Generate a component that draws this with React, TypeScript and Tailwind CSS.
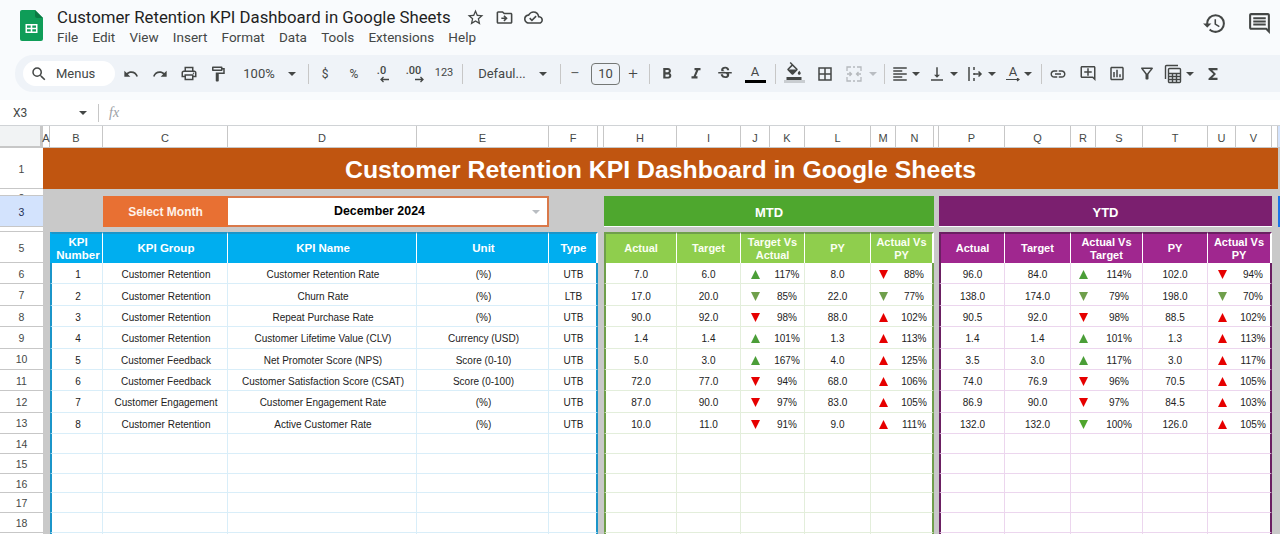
import * as React from 'react';
import clsx from 'clsx';
import {
  MdBorderAll,
  MdFormatAlignLeft,
  MdFormatBold,
  MdFormatColorFill,
  MdFormatItalic,
  MdFunctions,
  MdHistory,
  MdOutlineAddComment,
  MdOutlineCloudDone,
  MdOutlineComment,
  MdOutlineDriveFileMove,
  MdOutlineFilterAlt,
  MdOutlineFormatPaint,
  MdOutlineInsertChart,
  MdOutlinePrint,
  MdOutlineStarBorder,
  MdInsertLink,
  MdRedo,
  MdSearch,
  MdStrikethroughS,
  MdUndo,
  MdVerticalAlignBottom,
} from 'react-icons/md';

type Arrow = 'gu' | 'gd' | 'rd' | 'ru' | 'bd';

type Kpi = {
  no: number;
  group: string;
  name: string;
  unit: string;
  type: string;
  mtd: [string, string, Arrow, string, string, Arrow, string];
  ytd: [string, string, Arrow, string, string, Arrow, string];
};

const kpis: Kpi[] = [
  { no: 1, group: 'Customer Retention', name: 'Customer Retention Rate', unit: '(%)', type: 'UTB', mtd: ['7.0', '6.0', 'gu', '117%', '8.0', 'rd', '88%'], ytd: ['96.0', '84.0', 'gu', '114%', '102.0', 'rd', '94%'] },
  { no: 2, group: 'Customer Retention', name: 'Churn Rate', unit: '(%)', type: 'LTB', mtd: ['17.0', '20.0', 'gd', '85%', '22.0', 'gd', '77%'], ytd: ['138.0', '174.0', 'gd', '79%', '198.0', 'gd', '70%'] },
  { no: 3, group: 'Customer Retention', name: 'Repeat Purchase Rate', unit: '(%)', type: 'UTB', mtd: ['90.0', '92.0', 'rd', '98%', '88.0', 'ru', '102%'], ytd: ['90.5', '92.0', 'rd', '98%', '88.5', 'ru', '102%'] },
  { no: 4, group: 'Customer Retention', name: 'Customer Lifetime Value (CLV)', unit: 'Currency (USD)', type: 'UTB', mtd: ['1.4', '1.4', 'gu', '101%', '1.3', 'ru', '113%'], ytd: ['1.4', '1.4', 'gu', '101%', '1.3', 'ru', '113%'] },
  { no: 5, group: 'Customer Feedback', name: 'Net Promoter Score (NPS)', unit: 'Score (0-10)', type: 'UTB', mtd: ['5.0', '3.0', 'gu', '167%', '4.0', 'ru', '125%'], ytd: ['3.5', '3.0', 'gu', '117%', '3.0', 'ru', '117%'] },
  { no: 6, group: 'Customer Feedback', name: 'Customer Satisfaction Score (CSAT)', unit: 'Score (0-100)', type: 'UTB', mtd: ['72.0', '77.0', 'rd', '94%', '68.0', 'ru', '106%'], ytd: ['74.0', '76.9', 'rd', '96%', '70.5', 'ru', '105%'] },
  { no: 7, group: 'Customer Engagement', name: 'Customer Engagement Rate', unit: '(%)', type: 'UTB', mtd: ['87.0', '90.0', 'rd', '97%', '83.0', 'ru', '105%'], ytd: ['86.9', '90.0', 'rd', '97%', '84.5', 'ru', '103%'] },
  { no: 8, group: 'Customer Retention', name: 'Active Customer Rate', unit: '(%)', type: 'UTB', mtd: ['10.0', '11.0', 'rd', '91%', '9.0', 'ru', '111%'], ytd: ['132.0', '132.0', 'bd', '100%', '126.0', 'ru', '105%'] },
];

const menus = ['File', 'Edit', 'View', 'Insert', 'Format', 'Data', 'Tools', 'Extensions', 'Help'];

const columns = ['A', 'B', 'C', 'D', 'E', 'F', '', 'H', 'I', 'J', 'K', 'L', 'M', 'N', '', 'P', 'Q', 'R', 'S', 'T', 'U', 'V', ''];

function SheetsLogo() {
  return (
    <svg width="23" height="31" viewBox="0 0 23 31" className="shrink-0">
      <path d="M2 0h13l8 8v21a2 2 0 0 1-2 2H2a2 2 0 0 1-2-2V2a2 2 0 0 1 2-2z" fill="#0f9d58" />
      <path d="M15 0l8 8h-6a2 2 0 0 1-2-2z" fill="#0b7a44" />
      <path d="M5.5 14h12v9h-12z M7 15.5v2.2h3.7v-2.2z M12.3 15.5v2.2H16v-2.2z M7 19.3v2.2h3.7v-2.2z M12.3 19.3v2.2H16v-2.2z" fill="#fff" fillRule="evenodd" />
    </svg>
  );
}

function Caret({ className, light }: { className?: string; light?: boolean }) {
  return (
    <svg width="8" height="4" viewBox="0 0 8 4" className={clsx('shrink-0', className)}>
      <polygon points="0,0 8,0 4,4" fill={light ? '#b9bdc2' : '#444746'} />
    </svg>
  );
}

function Divider({ className }: { className?: string }) {
  return <div className={clsx('h-5 w-px shrink-0 bg-[#c7c7c7]', className)} />;
}

function MergeIcon() {
  return (
    <svg width="18" height="18" viewBox="0 0 18 18" fill="none" stroke="#b5b9bd" strokeWidth="1.3">
      <path d="M2 6V2h4 M12 2h4v4 M2 12v4h4 M12 16h4v-4" />
      <path d="M2 9h4 M4.5 7l2 2-2 2 M16 9h-4 M13.5 7l-2 2 2 2" />
      <path d="M8 2h2 M8 16h2" />
    </svg>
  );
}

function WrapIcon() {
  return (
    <svg width="18" height="18" viewBox="0 0 18 18" fill="none" stroke="#444746" strokeWidth="1.5">
      <path d="M3 2v14" />
      <path d="M8 2v3 M8 8v2 M8 13v3" />
      <path d="M8 9h7 M12.5 6.5L15 9l-2.5 2.5" />
    </svg>
  );
}

function TableIcon() {
  return (
    <svg width="18" height="20" viewBox="0 0 18 20" fill="none" stroke="#444746" strokeWidth="1.4">
      <path d="M1.5 15V2.5a1 1 0 0 1 1-1H14" />
      <rect x="4.5" y="4.5" width="12" height="14" rx="1" />
      <path d="M4.5 9.5h12 M4.5 12.5h12 M4.5 15.5h12 M8.5 9.5v9 M12.5 9.5v9" />
    </svg>
  );
}

function DecimalArrow({ right }: { right?: boolean }) {
  return (
    <svg width="9" height="7" viewBox="0 0 9 7" fill="none" stroke="#444746" strokeWidth="1.3" className="-ml-[6px] mt-[12px]">
      {right ? <path d="M0 3.5h8 M5.5 1L8 3.5 5.5 6" /> : <path d="M9 3.5H1 M3.5 1L1 3.5 3.5 6" />}
    </svg>
  );
}

function Slot({ className, children }: { className: string; children: React.ReactNode }) {
  return <div className={clsx('flex shrink-0 items-center justify-center', className)}>{children}</div>;
}

function TopBar() {
  return (
    <div className="flex h-[55px] shrink-0 items-start pl-5 pr-[8px] pt-[10px]">
      <SheetsLogo />
      <div className="ml-[14px] flex flex-col">
        <div className="flex h-[14px] items-center">
          <span className="whitespace-nowrap text-[16.8px] leading-[14px] text-[#1f1f1f]">Customer Retention KPI Dashboard in Google Sheets</span>
          <MdOutlineStarBorder className="ml-[15px] text-[19px] text-[#444746]" />
          <MdOutlineDriveFileMove className="ml-[10px] text-[19px] text-[#444746]" />
          <MdOutlineCloudDone className="ml-[10px] text-[19px] text-[#444746]" />
        </div>
        <div className="mt-[4px] flex gap-[14.2px] text-[13.5px] leading-[18px] text-[#444746]">
          {menus.map((m) => (
            <span key={m}>{m}</span>
          ))}
        </div>
      </div>
      <div className="ml-auto flex items-center gap-[20px] pt-[1px] text-[#444746]">
        <MdHistory className="text-[25px]" />
        <MdOutlineComment className="text-[25px]" />
      </div>
    </div>
  );
}

function Toolbar() {
  return (
    <div className="ml-[15px] flex h-[37px] shrink-0 items-center rounded-l-[18px] bg-[#eff3f8] text-[#444746]">
      <div className="ml-[8px] flex h-[25px] w-[92px] shrink-0 items-center rounded-full bg-white pl-[7px]">
        <MdSearch className="text-[18px]" />
        <span className="ml-[8px] text-[13px]">Menus</span>
      </div>
      <Slot className="ml-[7px] w-[18px]"><MdUndo className="text-[16px]" /></Slot>
      <Slot className="ml-[11px] w-[18px]"><MdRedo className="text-[16px]" /></Slot>
      <Slot className="ml-[11px] w-[18px]"><MdOutlinePrint className="text-[19px]" /></Slot>
      <Slot className="ml-[11px] w-[18px]"><MdOutlineFormatPaint className="text-[18px]" /></Slot>
      <Slot className="ml-[15px] w-[34px] text-[13px]">100%</Slot>
      <Slot className="ml-[11px] w-[10px]"><Caret /></Slot>
      <Divider className="ml-[11px]" />
      <Slot className="ml-[10px] w-[12px] text-[12px]">$</Slot>
      <Slot className="ml-[16px] w-[14px] text-[12px]">%</Slot>
      <Slot className="ml-[13px] w-[18px] text-[11px] font-medium">
        <span className="-mt-[5px]">.0</span>
        <DecimalArrow />
      </Slot>
      <Slot className="ml-[12px] w-[22px] text-[11px] font-medium">
        <span className="-mt-[5px]">.00</span>
        <DecimalArrow right />
      </Slot>
      <Slot className="ml-[8px] w-[20px] text-[11px]">123</Slot>
      <Divider className="ml-[8px]" />
      <Slot className="ml-[14px] w-[50px] whitespace-nowrap text-[13px]">Defaul...</Slot>
      <Slot className="ml-[11px] w-[10px]"><Caret /></Slot>
      <Divider className="ml-[12px]" />
      <Slot className="ml-[8px] w-[12px] text-[17px] font-light">−</Slot>
      <Slot className="ml-[10px] h-[22px] w-[29px] rounded-[4px] border border-[#747775] text-[13px]">10</Slot>
      <Slot className="ml-[7px] w-[12px] text-[17px] font-light">+</Slot>
      <Divider className="ml-[10px]" />
      <Slot className="ml-[8px] w-[18px]"><MdFormatBold className="text-[20px]" /></Slot>
      <Slot className="ml-[11px] w-[18px]"><MdFormatItalic className="text-[20px]" /></Slot>
      <Slot className="ml-[11px] w-[18px]"><MdStrikethroughS className="text-[19px]" /></Slot>
      <Slot className="ml-[11px] w-[20px] flex-col">
        <span className="text-[13px] leading-[14px]">A</span>
        <span className="mt-[1px] h-[3px] w-[21px] bg-black" />
      </Slot>
      <Divider className="ml-[10px]" />
      <Slot className="ml-[8px] w-[20px] flex-col">
        <MdFormatColorFill className="-mt-[3px] text-[18px]" />
        <span className="h-[3px] w-[21px] bg-[#c9cdd1]" />
      </Slot>
      <Slot className="ml-[12px] w-[18px]"><MdBorderAll className="text-[20px]" /></Slot>
      <Slot className="ml-[11px] w-[18px]"><MergeIcon /></Slot>
      <Slot className="ml-[6px] w-[8px]"><Caret light /></Slot>
      <Divider className="ml-[7px]" />
      <Slot className="ml-[6px] w-[18px]"><MdFormatAlignLeft className="text-[20px]" /></Slot>
      <Slot className="ml-[3px] w-[8px]"><Caret /></Slot>
      <Slot className="ml-[8px] w-[18px]"><MdVerticalAlignBottom className="text-[20px]" /></Slot>
      <Slot className="ml-[4px] w-[8px]"><Caret /></Slot>
      <Slot className="ml-[8px] w-[18px]"><WrapIcon /></Slot>
      <Slot className="ml-[4px] w-[8px]"><Caret /></Slot>
      <Slot className="ml-[8px] w-[18px] flex-col">
        <span className="text-[13px] leading-[13px]">A</span>
        <svg width="16" height="5" viewBox="0 0 16 5" fill="none" stroke="#444746" strokeWidth="1.2">
          <path d="M1 1.5h13 M12 0l2 1.5-2 1.5" />
        </svg>
      </Slot>
      <Slot className="ml-[2px] w-[8px]"><Caret /></Slot>
      <Divider className="ml-[9px]" />
      <Slot className="ml-[7px] w-[18px]"><MdInsertLink className="text-[20px]" /></Slot>
      <Slot className="ml-[12px] w-[18px]"><MdOutlineAddComment className="text-[19px]" /></Slot>
      <Slot className="ml-[11px] w-[18px]"><MdOutlineInsertChart className="text-[19px]" /></Slot>
      <Slot className="ml-[12px] w-[18px]"><MdOutlineFilterAlt className="text-[19px]" /></Slot>
      <Slot className="ml-[8px] w-[18px]"><TableIcon /></Slot>
      <Slot className="ml-[4px] w-[8px]"><Caret /></Slot>
      <Slot className="ml-[10px] w-[18px]"><MdFunctions className="text-[20px]" /></Slot>
    </div>
  );
}

function FormulaBar() {
  return (
    <div className="mt-[8px] flex h-[26px] shrink-0 items-center border-b border-[#d0d3d6] bg-white text-[#444746]">
      <span className="ml-[13px] w-[66px] text-[12px]">X3</span>
      <Caret />
      <div className="ml-[11px] h-[18px] w-px bg-[#c7c7c7]" />
      <span className="ml-[10px] font-['Liberation_Serif',serif] text-[14px] italic text-[#9aa0a6]">fx</span>
    </div>
  );
}

function RowHead({ label, active, clipped }: { label?: number; active?: boolean; clipped?: boolean }) {
  return (
    <div
      className={clsx(
        'flex justify-center overflow-hidden border-b border-[#c7c7c7] text-[10.5px]',
        clipped ? 'items-start pt-[3px] leading-[12px]' : 'items-center pt-[3px]',
        active ? 'bg-[#d3e3fd] font-medium text-[#1f2f55]' : 'bg-white text-[#444746]',
      )}
    >
      {label}
    </div>
  );
}

function Triangle({ kind }: { kind: Arrow }) {
  const up = kind === 'gu' || kind === 'ru';
  const fill = { gu: '#4b9e38', gd: '#6f9f4b', rd: '#e60000', ru: '#e60000', bd: '#4fa52d' }[kind];
  return (
    <svg width="9" height="9" viewBox="0 0 9 9">
      <polygon points={up ? '4.5,0 9,9 0,9' : '0,0 9,0 4.5,9'} fill={fill} />
    </svg>
  );
}

const Gray = ({ className }: { className?: string }) => <div className={clsx('bg-[#c9c9c9]', className)} />;

const dataCell = 'flex items-center justify-center whitespace-nowrap border-b bg-white pt-[3px] text-[10px] text-[#222]';
const headCell = 'flex items-center justify-center border-t-2 text-center font-bold leading-[13px]';

function HeaderRow() {
  const blue = clsx(headCell, 'border-r border-t-[#1b95c9] border-r-white bg-[#00aeef] pl-[2px] text-[11.5px] text-white');
  const green = clsx(headCell, 'border-r border-t-[#6f9f4b] border-r-white bg-[#8fce4d] text-[11px] text-[#fbfff2]');
  const purple = clsx(headCell, 'border-r border-t-[#6b1f62] border-r-white bg-[#a0278f] text-[11px] text-white');
  return (
    <>
      <RowHead label={5} />
      <Gray />
      <div className={clsx(blue, 'border-l-2 border-l-[#00aeef]')}>KPI Number</div>
      <div className={blue}>KPI Group</div>
      <div className={blue}>KPI Name</div>
      <div className={blue}>Unit</div>
      <div className={clsx(blue, 'border-r-2 border-r-[#00aeef]')}>Type</div>
      <Gray />
      <div className={clsx(green, 'border-l-2 border-l-[#6f9f4b]')}>Actual</div>
      <div className={green}>Target</div>
      <div className={clsx(green, 'col-span-2')}>Target Vs Actual</div>
      <div className={green}>PY</div>
      <div className={clsx(green, 'col-span-2 border-r-2 border-r-[#6f9f4b]')}>Actual Vs PY</div>
      <Gray />
      <div className={clsx(purple, 'border-l-2 border-l-[#6b1f62]')}>Actual</div>
      <div className={purple}>Target</div>
      <div className={clsx(purple, 'col-span-2')}>Actual Vs Target</div>
      <div className={purple}>PY</div>
      <div className={clsx(purple, 'col-span-2 border-r-2 border-r-[#6b1f62]')}>Actual Vs PY</div>
      <Gray className="col-span-2" />
    </>
  );
}

function DataRow({ rowNo, kpi }: { rowNo?: number; kpi?: Kpi }) {
  const blue = clsx(dataCell, 'border-r border-[#d9eef9] pl-[2px]');
  const green = clsx(dataCell, 'border-r border-[#e3eedb]');
  const purple = clsx(dataCell, 'border-r border-[#ecd6ee]');
  const m = kpi?.mtd;
  const y = kpi?.ytd;
  return (
    <>
      <RowHead label={rowNo} />
      <Gray />
      <div className={clsx(blue, 'border-l-2 border-l-[#1b95c9]')}>{kpi?.no}</div>
      <div className={blue}>{kpi?.group}</div>
      <div className={blue}>{kpi?.name}</div>
      <div className={blue}>{kpi?.unit}</div>
      <div className={clsx(blue, 'border-r-2 border-r-[#1b95c9]')}>{kpi?.type}</div>
      <Gray />
      <div className={clsx(green, 'border-l-2 border-l-[#6f9f4b]')}>{m?.[0]}</div>
      <div className={green}>{m?.[1]}</div>
      <div className={clsx(dataCell, 'border-[#e3eedb]')}>{m && <Triangle kind={m[2]} />}</div>
      <div className={green}>{m?.[3]}</div>
      <div className={green}>{m?.[4]}</div>
      <div className={clsx(dataCell, 'border-[#e3eedb]')}>{m && <Triangle kind={m[5]} />}</div>
      <div className={clsx(green, 'border-r-2 border-r-[#6f9f4b]')}>{m?.[6]}</div>
      <Gray />
      <div className={clsx(purple, 'border-l-2 border-l-[#6b1f62]')}>{y?.[0]}</div>
      <div className={purple}>{y?.[1]}</div>
      <div className={clsx(dataCell, 'border-[#ecd6ee]')}>{y && <Triangle kind={y[2]} />}</div>
      <div className={purple}>{y?.[3]}</div>
      <div className={purple}>{y?.[4]}</div>
      <div className={clsx(dataCell, 'border-[#ecd6ee]')}>{y && <Triangle kind={y[5]} />}</div>
      <div className={clsx(purple, 'border-r-2 border-r-[#6b1f62]')}>{y?.[6]}</div>
      <Gray className="col-span-2" />
    </>
  );
}

function Sheet() {
  return (
    <div className="grid grid-cols-[43px_7px_53px_125px_189px_132px_49px_6px_73px_64px_29px_35px_66px_25px_38px_5px_66px_66px_25px_47px_65px_28px_36px_6px_2px] grid-rows-[22px_41px_7px_31px_5px_31px_repeat(8,21.375px)_repeat(6,19.8px)] font-['Liberation_Sans',Arial,sans-serif]">
      {/* column letters */}
      <div className="border-b-2 border-r-[3px] border-b-[#c7c7c7] border-r-[#c7c7c7] bg-[#f1f3f4]" />
      {columns.map((c, i) => (
        <div
          key={i}
          className="flex items-center justify-center border-b border-r border-[#c7c7c7] bg-white pt-[3px] text-[11px] text-[#444746]"
        >
          {c}
        </div>
      ))}
      <div className="border-b border-[#c7c7c7] bg-[#d3e3fd]" />

      {/* row 1: title */}
      <RowHead label={1} />
      <div className="col-span-23 flex items-center justify-center bg-[#c05510] pt-[2px] text-[24.8px] font-bold text-white">
        Customer Retention KPI Dashboard in Google Sheets
      </div>
      <Gray />

      <RowHead label={2} clipped />
      <Gray className="col-span-24" />

      {/* row 3: month picker and period banners */}
      <RowHead label={3} active />
      <Gray className="col-span-2" />
      <div className="flex items-center justify-center bg-[#e87033] text-[12px] font-bold text-[#fff3ea]">Select Month</div>
      <div className="col-span-2 flex items-center border-y-2 border-r-2 border-[#d9794a] bg-white pl-[106px] pr-[7px] text-[12.4px] font-bold text-black">
        <span>December 2024</span>
        <Caret light className="ml-auto" />
      </div>
      <Gray className="col-span-2" />
      <div className="col-span-7 mb-[1px] flex items-center justify-center bg-[#4ea72e] pt-[3px] text-[13px] font-bold text-white">MTD</div>
      <Gray />
      <div className="col-span-7 mb-[1px] flex items-center justify-center bg-[#7b1f6f] pt-[3px] text-[13px] font-bold text-white">YTD</div>
      <Gray />
      <div className="border-2 border-[#1a73e8] bg-[#e8f0fe]" />

      <RowHead label={4} clipped />
      <Gray className="col-span-24" />

      <HeaderRow />
      {kpis.map((k, i) => (
        <DataRow key={k.no} rowNo={i + 6} kpi={k} />
      ))}
      {[14, 15, 16, 17, 18].map((n) => (
        <DataRow key={n} rowNo={n} />
      ))}
      {/* only the top edge of row 19 shows */}
      <DataRow />
    </div>
  );
}

export default function App() {
  return (
    <div className="flex h-[534px] w-[1280px] flex-col overflow-hidden bg-[#f9fbfd] font-['Roboto',sans-serif]">
      <TopBar />
      <Toolbar />
      <FormulaBar />
      <Sheet />
    </div>
  );
}
